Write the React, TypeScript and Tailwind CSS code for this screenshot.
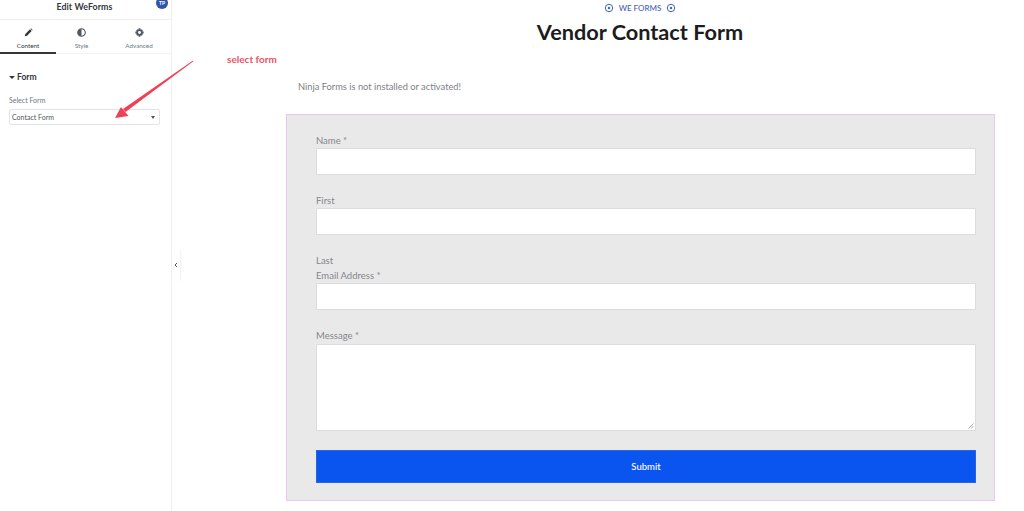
import React from "react";

const FONT = "font-['Lato','Noto_Sans',sans-serif]";

function Target() {
  return (
    <svg width="10" height="10" viewBox="0 0 10 10" fill="none" className="shrink-0">
      <circle cx="5" cy="5" r="3.7" stroke="#3f62b8" strokeWidth="1" />
      <circle cx="5" cy="5" r="1.2" fill="#3f62b8" />
    </svg>
  );
}

function Field({ label, className = "" }: { label: string; className?: string }) {
  return (
    <div className={className}>
      <div className="h-[16px] text-[9.5px] leading-[17px] text-[#87878c]">{label}</div>
      <div className="h-[27px] border border-[#dcdcdc] bg-white" />
    </div>
  );
}

function Tab({ label, active, icon, width }: { label: string; active?: boolean; icon: React.ReactNode; width: string }) {
  return (
    <div className={`flex h-[34px] ${width} flex-col items-center border-b-2 pt-[7px] ${active ? "border-[#33373d]" : "border-transparent"}`}>
      <div className="flex h-[11px] items-center">{icon}</div>
      <div className={`mt-[3px] text-[6.3px] leading-[9px] ${active ? "text-[#33373d]" : "text-[#6d7882]"}`}>{label}</div>
    </div>
  );
}

export default function App() {
  return (
    <div className={`relative flex h-[511px] w-[1024px] overflow-hidden bg-white ${FONT}`}>
      <aside className="w-[172px] shrink-0 border-r border-[#f0f0f1] bg-white">
        <div className="relative flex h-[20px] items-center justify-center border-b border-[#eeeeee] pb-[7px] pt-[1px]">
          <span className="pr-[2px] text-[8.8px] font-bold leading-[12px] tracking-[0.1px] text-[#33373d]">Edit WeForms</span>
          <div className="absolute left-[156px] top-[-3px] flex h-[12px] w-[12px] items-center justify-center rounded-full bg-[#2f55a4] text-[5px] font-bold leading-[5px] text-white">
            TP
          </div>
        </div>
        <div className="flex h-[34px] border-b border-[#f3f3f3]">
          <Tab
            active
            width="w-[56px]"
            label="Content"
            icon={
              <svg width="9" height="9" viewBox="0 0 10 10">
                <path d="M0.8 9.2 L1.5 6.6 L6.6 1.5 L8.5 3.4 L3.4 8.5 Z M7.2 0.9 L7.8 0.4 L9.6 2.2 L9.1 2.8 Z" fill="#33373d" />
              </svg>
            }
          />
          <Tab
            width="w-[51px]"
            label="Style"
            icon={
              <svg width="9" height="9" viewBox="0 0 10 10">
                <circle cx="5" cy="5" r="4.2" fill="none" stroke="#4f5660" strokeWidth="1.2" />
                <path d="M5 1 A4 4 0 0 0 5 9 Z" fill="#4f5660" />
              </svg>
            }
          />
          <Tab
            width="w-[64px]"
            label="Advanced"
            icon={
              <svg width="9" height="9" viewBox="0 0 10 10">
                <circle cx="5" cy="5" r="2.6" fill="none" stroke="#4f5660" strokeWidth="2" />
                <path d="M4 0.4 H6 V2 H4 Z M4 8 H6 V9.6 H4 Z M0.4 4 V6 H2 V4 Z M8 4 V6 H9.6 V4 Z M1.4 2.6 L2.6 1.4 L3.6 2.4 L2.4 3.6 Z M8.6 2.6 L7.4 1.4 L6.4 2.4 L7.6 3.6 Z M1.4 7.4 L2.6 8.6 L3.6 7.6 L2.4 6.4 Z M8.6 7.4 L7.4 8.6 L6.4 7.6 L7.6 6.4 Z" fill="#4f5660" />
              </svg>
            }
          />
        </div>
        <div className="px-[9px] pt-[17px]">
          <div className="flex h-[12px] items-center gap-[2px]">
            <span className="h-0 w-0 border-x-[3px] border-t-[3px] border-x-transparent border-t-[#33373d]" />
            <span className="text-[8.5px] font-bold leading-[12px] text-[#33373d]">Form</span>
          </div>
          <div className="mt-[12px] h-[10px] text-[7px] leading-[10px] text-[#6d7882]">Select Form</div>
          <div className="mt-[4px] flex h-[16px] w-[151px] items-center justify-between rounded-[2px] border border-[#e4e4e6] px-[2px] text-[7px] text-[#4f5660]">
            <span>Contact Form</span>
            <span className="mr-[2px] h-0 w-0 border-x-[2.5px] border-t-[3px] border-x-transparent border-t-[#4f5660]" />
          </div>
        </div>
      </aside>

      <main className="flex-1">
        <div className="flex h-[14px] items-center justify-center gap-[5px] pl-[84px] pt-[1px]">
          <Target />
          <span className="text-[8px] font-medium leading-[12px] text-[#3f62b8]">WE FORMS</span>
          <Target />
        </div>
        <h1 className="mt-[4px] pl-[84px] text-center text-[21.7px] font-bold leading-[28px] text-[#1c1c20]">Vendor Contact Form</h1>
        <p className="ml-[126px] mt-[34px] text-[9.3px] leading-[14px] text-[#808085]">Ninja Forms is not installed or activated!</p>
        <form className="ml-[114px] mt-[20px] h-[387px] w-[709px] border border-[#edc6ec] bg-[#e9e9e9] pl-[29px] pr-[18px] pt-[17px]">
          <Field label="Name *" />
          <Field label="First" className="mt-[17px]" />
          <div className="mt-[17px] h-[15px] text-[9.5px] leading-[17px] text-[#87878c]">Last</div>
          <Field label="Email Address *" />
          <div className="mt-[17px] h-[17px] text-[9.5px] leading-[17px] text-[#87878c]">Message *</div>
          <div className="relative h-[87px] border border-[#dcdcdc] bg-white">
            <svg width="6" height="6" viewBox="0 0 6 6" className="absolute bottom-[1px] right-[1px]">
              <path d="M0.5 5.5 L5.5 0.5 M3 5.5 L5.5 3" stroke="#8a8a8a" strokeWidth="0.7" />
            </svg>
          </div>
          <div className="mt-[19px] flex h-[33px] items-center justify-center border border-[#2f62dc] bg-[#0a55f0] pt-[1px] text-[9.5px] font-medium text-white">
            Submit
          </div>
        </form>
      </main>

      <div className="absolute left-[172px] top-[250px] flex h-[30px] w-[8px] items-center justify-center bg-white shadow-[1px_0_2px_rgba(0,0,0,0.06)]">
        <svg width="4" height="6" viewBox="0 0 4 6" fill="none">
          <path d="M3 1 L1 3 L3 5" stroke="#555" strokeWidth="1" />
        </svg>
      </div>

      <div className="absolute left-[227px] top-[52px] text-[10px] font-bold leading-[14px] text-[#ea5365]">select form</div>
      <svg width="90" height="66" viewBox="0 0 90 66" className="absolute left-[108px] top-[58px]">
        <path d="M85 2.6 L85.4 3.2 L17.5 54 L15 51 Z" fill="#ef4056" />
        <path d="M7 60 L13 49 L20.5 58 Z" fill="#ef4056" />
      </svg>
    </div>
  );
}
